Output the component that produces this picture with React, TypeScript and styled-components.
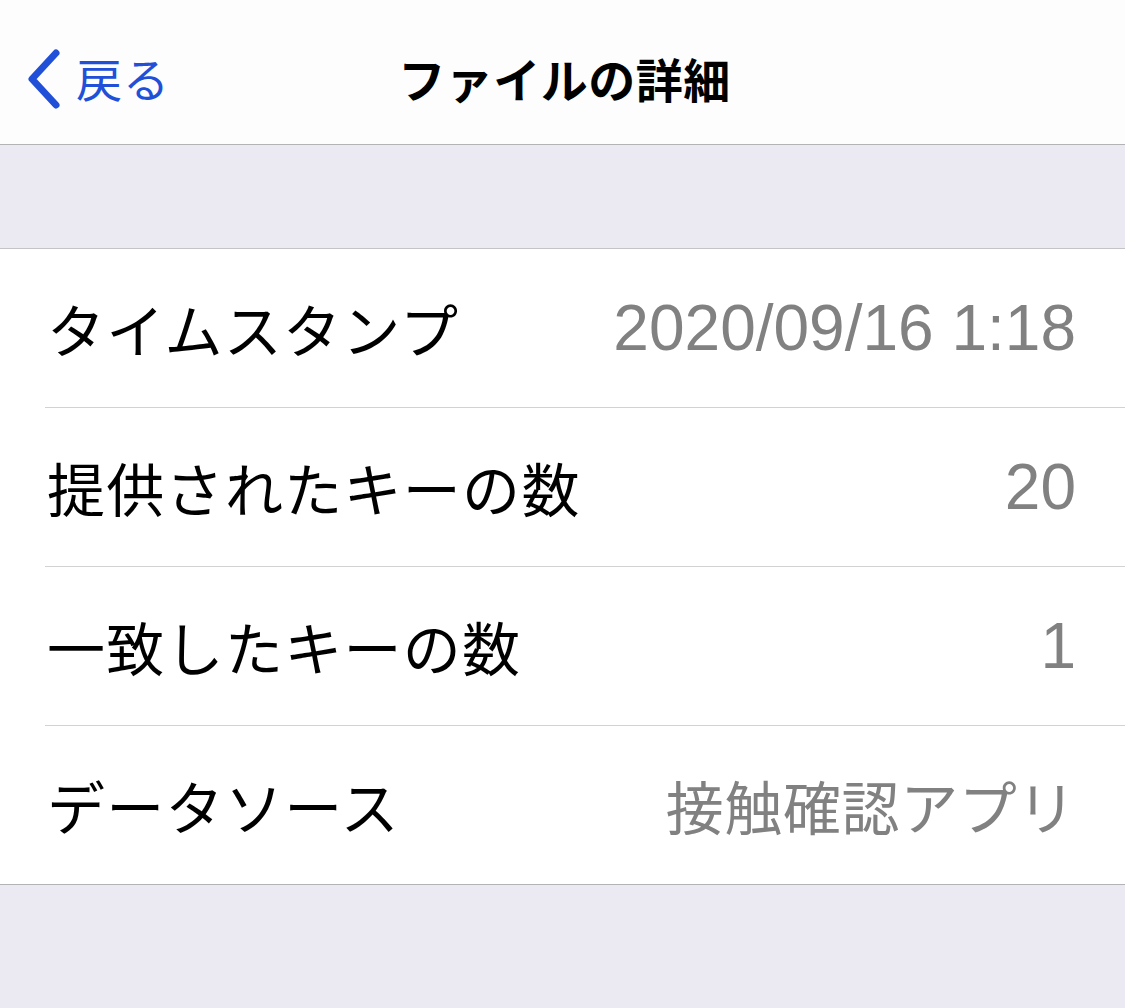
import React from "react"
import styled, { createGlobalStyle } from "styled-components"

const GlobalStyle = createGlobalStyle`
  html, body {
    margin: 0;
    padding: 0;
    background: #ebeaf2;
  }
  body {
    font-family: "Noto Sans CJK JP", "Liberation Sans", sans-serif;
  }
`

interface Detail {
  label: string
  value: string
  numeric?: boolean
}

const details: Detail[] = [
  { label: "タイムスタンプ", value: "2020/09/16 1:18", numeric: true },
  { label: "提供されたキーの数", value: "20", numeric: true },
  { label: "一致したキーの数", value: "1", numeric: true },
  { label: "データソース", value: "接触確認アプリ" },
]

const BackChevron = () => (
  <svg width="40" height="64" viewBox="0 0 40 64">
    <path d="M32 6 L8 32 L32 58" fill="none" stroke="#2150d8" strokeWidth="7" strokeLinecap="round" strokeLinejoin="round" />
  </svg>
)

export default function App() {
  return (
    <S.Page>
      <GlobalStyle />
      <S.NavBar>
        <S.BackButton>
          <BackChevron />
          <S.BackLabel>戻る</S.BackLabel>
        </S.BackButton>
        <S.Title>ファイルの詳細</S.Title>
      </S.NavBar>
      <S.SectionGap />
      <S.List>
        {details.map((d) => (
          <S.Row key={d.label}>
            <S.RowInner>
              <S.Label>{d.label}</S.Label>
              <S.Value $numeric={d.numeric}>{d.value}</S.Value>
            </S.RowInner>
          </S.Row>
        ))}
      </S.List>
      <S.Footer />
    </S.Page>
  )
}

const S = {
  Page: styled.div`
    width: 1125px;
    min-height: 1008px;
    background: #ebeaf2;
  `,
  NavBar: styled.div`
    position: relative;
    height: 144px;
    background: #fdfdfd;
    border-bottom: 1px solid #b3b3b6;
    display: flex;
    align-items: center;
    justify-content: center;
  `,
  BackButton: styled.div`
    position: absolute;
    left: 24px;
    top: 0;
    bottom: 0;
    display: flex;
    align-items: center;
    gap: 12px;
    padding-top: 14px;
  `,
  BackLabel: styled.span`
    font-size: 46px;
    letter-spacing: 1px;
    color: #2150d8;
    line-height: 1;
    margin-top: -4px;
  `,
  Title: styled.h1`
    margin: 10px 0 0 4px;
    font-size: 47px;
    font-weight: 700;
    letter-spacing: 0.5px;
    color: #000;
    line-height: 1;
  `,
  SectionGap: styled.div`
    height: 103px;
    background: #ebeaf2;
    border-bottom: 1px solid #c4c4c6;
  `,
  List: styled.div`
    background: #fff;
    border-bottom: 1px solid #b3b3b6;
  `,
  Row: styled.div`
    padding-left: 45px;
    &:not(:last-child) > div {
      border-bottom: 1px solid #d2d2d4;
    }
  `,
  RowInner: styled.div`
    height: 158px;
    display: flex;
    align-items: center;
    justify-content: space-between;
    padding-right: 49px;
  `,
  Label: styled.span`
    font-size: 58px;
    letter-spacing: 1.3px;
    color: #000;
    line-height: 1;
    margin-left: 2px;
  `,
  Value: styled.span<{ $numeric?: boolean }>`
    font-family: ${(p) => (p.$numeric ? `"Liberation Sans", "Noto Sans CJK JP", sans-serif` : `"Noto Sans CJK JP", sans-serif`)};
    font-size: ${(p) => (p.$numeric ? "64px" : "58px")};
    letter-spacing: ${(p) => (p.$numeric ? "0" : "0.6px")};
    color: #818181;
    line-height: 1;
  `,
  Footer: styled.div`
    height: 124px;
    background: #ebeaf2;
  `,
}
